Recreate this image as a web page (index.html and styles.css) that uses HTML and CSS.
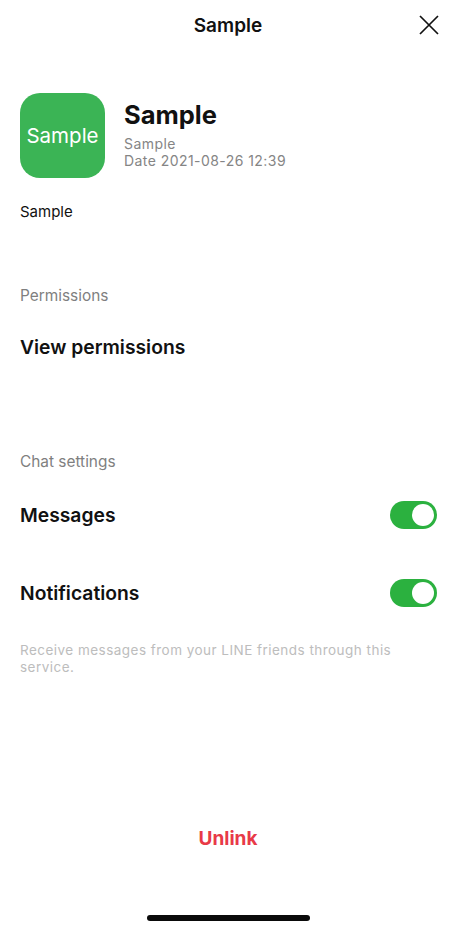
FILE: index.html
```html
<!DOCTYPE html>
<html lang="en">
<head>
<meta charset="utf-8">
<title>Sample</title>
<link rel="stylesheet" href="styles.css">
</head>
<body>
<div class="screen">
  <header class="nav">
    <h1 class="nav-title">Sample</h1>
    <svg class="close" viewBox="0 0 20 20" width="20" height="20" aria-label="Close"><path d="M1 1 L19 19 M19 1 L1 19" fill="none" stroke="#111" stroke-width="1.7"/></svg>
  </header>
  <section class="app">
    <div class="app-icon">Sample</div>
    <div class="app-info">
      <div class="app-name">Sample</div>
      <div class="app-meta">Sample</div>
      <div class="app-meta">Date 2021-08-26 12:39</div>
    </div>
  </section>
  <p class="desc">Sample</p>
  <h2 class="section-label perm-label">Permissions</h2>
  <div class="row-title perm-row">View permissions</div>
  <h2 class="section-label chat-label">Chat settings</h2>
  <div class="row first-row">
    <span class="row-title">Messages</span>
    <span class="toggle"><span class="knob"></span></span>
  </div>
  <div class="row second-row">
    <span class="row-title">Notifications</span>
    <span class="toggle"><span class="knob"></span></span>
  </div>
  <p class="note">Receive messages from your LINE friends through this service.</p>
  <div class="unlink">Unlink</div>
  <div class="home-wrap"><div class="home"></div></div>
</div>
</body>
</html>
```
FILE: styles.css
```css
* { box-sizing: border-box; margin: 0; padding: 0; }
html, body { background: #fff; }
body { width: 456px; height: 930px; overflow: hidden; font-family: Inter, "Liberation Sans", sans-serif; color: #111; }
.screen { display: flex; flex-direction: column; height: 930px; padding: 0 20px; }
.nav { position: relative; height: 50px; display: flex; align-items: center; justify-content: center; margin: 0 -20px; padding-top: 2px; }
.nav-title { font-size: 19px; font-weight: 600; line-height: 48px; }
.close { position: absolute; right: 17px; top: 15px; }
.app { display: flex; gap: 19px; margin-top: 43px; }
.app-icon { width: 85px; height: 85px; border-radius: 20px; background: #3bb455; color: #fff; font-size: 20.5px; display: flex; align-items: center; justify-content: center; }
.app-info { padding-top: 7px; }
.app-name { font-size: 25.5px; font-weight: 700; line-height: 30px; margin-bottom: 5px; }
.app-meta { font-size: 14px; line-height: 17px; color: #858585; letter-spacing: 0.44px; }
.desc { font-size: 15px; line-height: 18px; margin-top: 25px; }
.section-label { font-size: 15.4px; font-weight: 400; line-height: 18px; color: #7f7f7f; }
.perm-label { margin-top: 66px; }
.row-title { font-size: 19.3px; font-weight: 600; line-height: 24px; }
.perm-row { margin-top: 30px; }
.chat-label { margin-top: 94px; }
.row { display: flex; justify-content: space-between; align-items: center; height: 28px; }
.first-row { margin-top: 30px; }
.second-row { margin-top: 50px; }
.toggle { width: 47px; height: 28px; border-radius: 14px; background: #2bb13f; display: flex; align-items: center; justify-content: flex-end; padding-right: 3px; margin-right: -1px; }
.knob { width: 22px; height: 22px; border-radius: 50%; background: #fff; }
.note { font-size: 13.5px; line-height: 17px; color: #bdbdbd; margin-top: 35px; letter-spacing: 0.47px; }
.unlink { font-size: 19px; font-weight: 700; color: #e83a47; text-align: center; line-height: 24px; margin-top: 151px; }
.home-wrap { display: flex; justify-content: center; margin-top: 64px; }
.home { width: 163px; height: 6px; border-radius: 3px; background: #0a0a0a; }
```
